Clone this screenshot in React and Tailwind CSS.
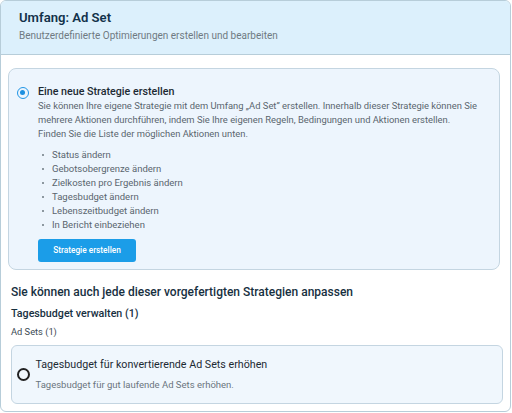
export default function App() {
  const items = [
    "Status ändern",
    "Gebotsobergrenze ändern",
    "Zielkosten pro Ergebnis ändern",
    "Tagesbudget ändern",
    "Lebenszeitbudget ändern",
    "In Bericht einbeziehen",
  ];
  return (
    <div className="w-[512px] h-[413px] bg-white" style={{ fontFamily: "Roboto, 'Liberation Sans', sans-serif" }}>
      <div className="w-[511px] h-[412px] border border-[#b7cdd9] rounded-[6px] overflow-hidden flex flex-col">
        <div className="h-[54px] shrink-0 bg-[#dcf0fc] border-b border-[#b7cdd9] pl-[18px] pt-[8px]">
          <div className="text-[13.1px] leading-[18px] font-semibold text-[#12324a]">Umfang: Ad Set</div>
          <div className="text-[10px] leading-[14px] mt-[2px] text-[#6f7a82]">Benutzerdefinierte Optimierungen erstellen und bearbeiten</div>
        </div>
        <div className="flex flex-col pl-[7px]">
          <div className="mt-[13px] w-[492px] h-[202px] bg-[#edf5fd] border border-[#c4d5e1] rounded-[8px] pl-[7.5px] pt-[16px]">
            <div className="flex gap-[9.5px]">
              <div className="w-[12px] h-[12px] mt-[1.5px] rounded-full border-[1.5px] border-[#2196e6] flex items-center justify-center shrink-0">
                <div className="w-[5px] h-[5px] rounded-full bg-[#1e90e0]" />
              </div>
              <div className="flex-1">
                <div className="text-[10.7px] leading-[14px] font-medium text-[#1c2a33]">Eine neue Strategie erstellen</div>
                <div className="text-[9.4px] leading-[14px] text-[#5a656e]">
                  <p>Sie können Ihre eigene Strategie mit dem Umfang „Ad Set” erstellen. Innerhalb dieser Strategie können Sie mehrere Aktionen durchführen, indem Sie Ihre eigenen Regeln, Bedingungen und Aktionen erstellen.</p>
                  <p>Finden Sie die Liste der möglichen Aktionen unten.</p>
                </div>
                <ul className="mt-[7px] text-[9.5px] leading-[14px] text-[#5a656e]">
                  {items.map((t) => (
                    <li key={t} className="flex items-center">
                      <span className="w-[14px] flex pl-[4px]">
                        <span className="w-[2px] h-[2px] bg-[#6d7880] rounded-full" />
                      </span>
                      <span>{t}</span>
                    </li>
                  ))}
                </ul>
                <button className="mt-[7px] w-[98px] h-[23px] rounded-[3px] bg-[#1b9de8] text-white text-[8.3px] font-medium">
                  Strategie erstellen
                </button>
              </div>
            </div>
          </div>
          <div className="pl-[3px] mt-[14px] text-[12px] leading-[16px] font-medium text-[#17303f]">Sie können auch jede dieser vorgefertigten Strategien anpassen</div>
          <div className="pl-[3px] mt-[7px] text-[10.7px] leading-[14px] font-medium text-[#17303f]">Tagesbudget verwalten (1)</div>
          <div className="pl-[3px] mt-[5px] text-[9.3px] leading-[12px] text-[#3c4a53]">Ad Sets (1)</div>
          <div className="mt-[7px] ml-[2.5px] w-[492px] h-[59px] bg-[#f0f7fd] border border-[#c4d5e1] rounded-[6px] flex items-center pl-[5px] gap-[6px]">
            <div className="w-[13px] h-[13px] rounded-full border-[2px] border-[#222] shrink-0" />
            <div className="flex flex-col">
              <div className="text-[10.7px] leading-[14px] text-[#1c2a33]">Tagesbudget für konvertierende Ad Sets erhöhen</div>
              <div className="text-[9.5px] leading-[12px] mt-[7px] text-[#6a757d]">Tagesbudget für gut laufende Ad Sets erhöhen.</div>
            </div>
          </div>
        </div>
      </div>
    </div>
  );
}
